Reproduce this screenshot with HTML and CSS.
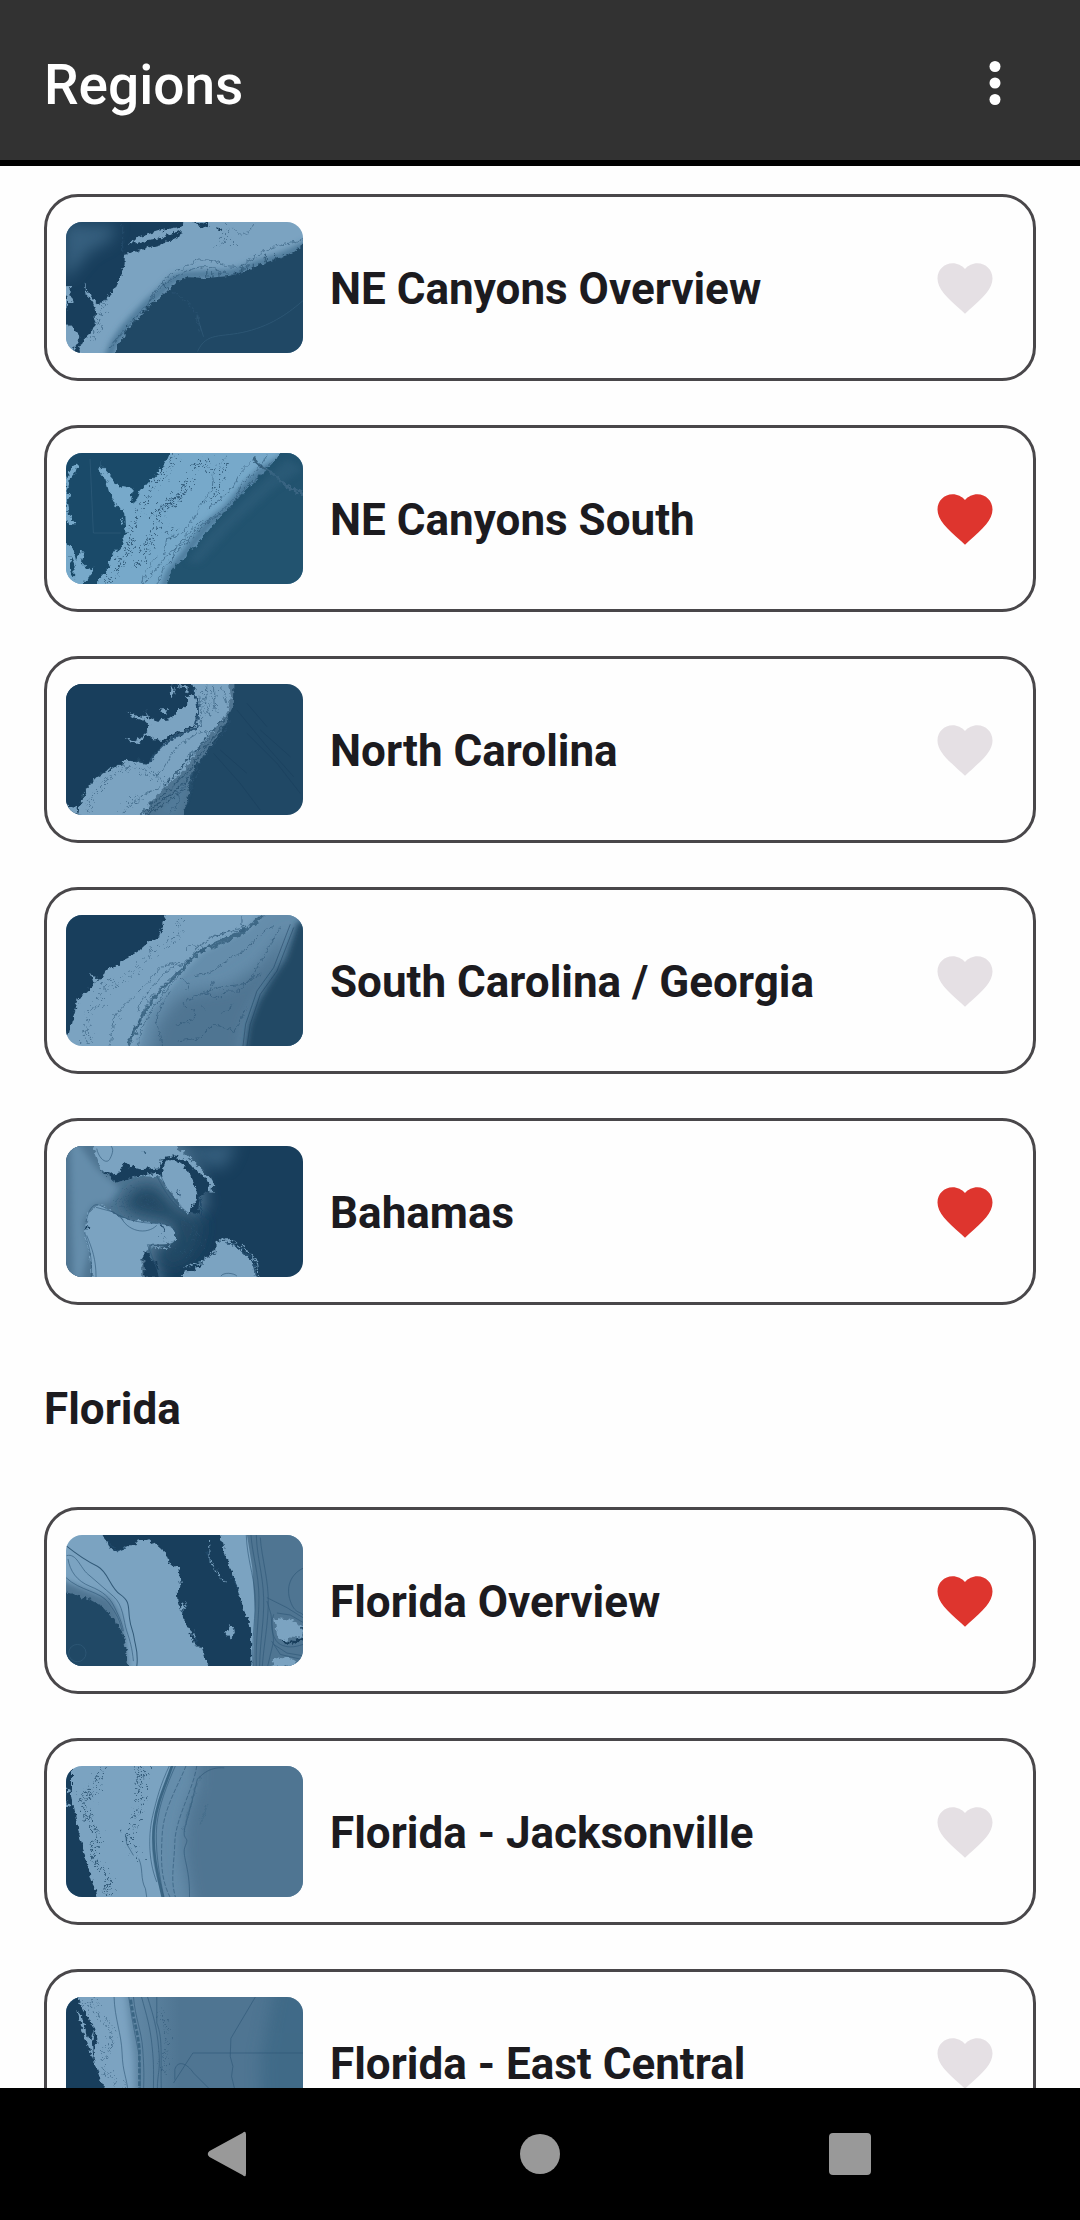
FILE: index.html
```
<!DOCTYPE html>
<html lang="en">
<head>
    <meta charset="UTF-8">
    <meta name="viewport" content="width=device-width, initial-scale=1.0">
    <title>Regions</title>
    <link rel="stylesheet" href="styles.css">
</head>
<body>
    <!-- Shared icons and filters -->
    <svg class="defs" aria-hidden="true">
        <defs>
            <symbol id="heart" viewBox="0 0 24 24">
                <path d="M12 21.35l-1.45-1.32C5.4 15.36 2 12.28 2 8.5 2 5.42 4.42 3 7.5 3c1.74 0 3.41.81 4.5 2.09C13.09 3.81 14.76 3 16.5 3 19.58 3 22 5.42 22 8.5c0 3.78-3.4 6.86-8.55 11.54L12 21.35z"/>
            </symbol>
            <filter id="coast" x="-10%" y="-10%" width="120%" height="120%" color-interpolation-filters="sRGB">
                <feTurbulence type="fractalNoise" baseFrequency="0.07" numOctaves="3" seed="4"/>
                <feDisplacementMap in="SourceGraphic" scale="20" xChannelSelector="R" yChannelSelector="G"/>
            </filter>
            <filter id="squiggle" x="-30%" y="-30%" width="160%" height="160%" color-interpolation-filters="sRGB">
                <feTurbulence type="fractalNoise" baseFrequency="0.09" numOctaves="3" seed="9"/>
                <feDisplacementMap in="SourceGraphic" scale="70" xChannelSelector="R" yChannelSelector="G"/>
            </filter>
            <filter id="soft" x="-30%" y="-30%" width="160%" height="160%">
                <feGaussianBlur stdDeviation="10"/>
            </filter>
            <filter id="softer" x="-40%" y="-40%" width="180%" height="180%">
                <feGaussianBlur stdDeviation="22"/>
            </filter>
            <linearGradient id="slope" x1="0" x2="1" y1="0" y2="0">
                <stop offset="0" stop-color="#7ba3c1"/>
                <stop offset="1" stop-color="#4f7592"/>
            </linearGradient>
        </defs>
    </svg>

    <header class="app-bar">
        <h1>Regions</h1>
        <button class="icon-btn" type="button" aria-label="More options">
            <svg class="icon" viewBox="0 0 24 24">
                <circle cx="12" cy="6" r="2"/>
                <circle cx="12" cy="12" r="2"/>
                <circle cx="12" cy="18" r="2"/>
            </svg>
        </button>
    </header>

    <main class="content">
        <ul class="region-list">
            <li class="region-card">
                <a class="region-link" href="#ne-canyons-overview">
                    <svg class="thumb" viewBox="18 21 710 395" preserveAspectRatio="xMidYMid slice" aria-hidden="true">
                        <rect class="shelf" x="18" y="21" width="710" height="395"/>
                        <path class="slope-edge" filter="url(#soft)" d="M760 78 690 114 640 134 590 149 540 169 500 178 440 180 380 182 340 194 300 232 260 268 225 305 190 345 160 390 140 440"/>
                        <g filter="url(#coast)">
                            <path class="deep" d="M760 75 728 90 690 118 650 132 610 146 580 158 540 174 505 184 440 190 385 188 350 200 312 238 272 270 236 308 202 345 178 385 150 440H760Z"/>
                            <path class="land" d="M-10 0H382L362 36 300 48 265 58 235 68 205 82 220 88 262 76 296 72 330 58 366 50 360 64 312 86 268 98 222 112 192 118 190 155 180 192 168 218 142 246 122 270 112 264 98 252 84 232 74 206 80 240 96 262 108 290 106 325 92 356 74 372 58 404 64 440H-10Z"/>
                            <path class="land" d="M400 21 445 28 440 40 414 36ZM466 38 484 42 478 52Z"/>
                            <path class="shelf" d="M16 325 34 334 44 350 58 366 50 390 40 404 44 425H12ZM16 215 36 214 28 240 38 262 22 262 16 300Z"/>
                        </g>
                        <g class="haze" filter="url(#softer)">
                            <path d="M10 20 90 30 170 30 150 80 90 110 40 170 10 200Z"/>
                        </g>
                        <g class="ink" filter="url(#coast)">
                            <path d="M256 290C272 240 300 192 350 170S400 132 440 136 490 156 520 158 570 130 620 106 690 92 728 72"/>
                            <path d="M150 400C190 340 250 290 280 246S350 180 400 162 470 172 500 178 540 168 560 158"/>
                            <path class="strong" d="M302 206 330 226 350 240 380 262 410 300 420 350"/>
                            <path class="strong" d="M545 150v24M560 148v20M582 144v22M612 122v32M618 118v30M646 116v24M666 118v16M440 168v20M458 172v18M476 172v20M196 330v24M220 310v22"/>
                            <path d="M188 30V112M520 40 545 66 560 56 585 24"/>
                        </g>
                        <g class="ink" filter="url(#squiggle)">
                            <path d="M480 50 520 90M500 40 480 90M120 290 112 340 96 380M140 250 122 300 110 330"/>
                        </g>
                        <path class="trace" d="M412 410C440 350 480 370 560 350S690 290 728 258M430 366 410 300"/>
                    </svg>
                    <span class="region-name">NE Canyons Overview</span>
                </a>
                <button class="icon-btn fav" type="button" aria-pressed="false" aria-label="Favorite NE Canyons Overview"><svg class="icon"><use href="#heart"/></svg></button>
            </li>

            <li class="region-card">
                <a class="region-link" href="#ne-canyons-south">
                    <svg class="thumb" viewBox="18 21 710 395" preserveAspectRatio="xMidYMid slice" aria-hidden="true">
                        <rect class="shelf bright" x="18" y="21" width="710" height="395"/>
                        <path class="slope-edge" filter="url(#soft)" d="M700 20 600 80 550 130 500 190 440 240 400 290 370 330 330 380 310 430"/>
                        <g filter="url(#coast)">
                            <path class="deep teal" d="M760 0H670L645 48 600 92 556 132 530 160 496 198 462 232 440 262 428 270 412 300 380 320 372 340 338 368 312 440H760Z"/>
                            <path class="land teal" d="M-10 0H338L318 46 290 84 262 114 240 140 228 170 212 174 218 130 196 118 178 126 156 98 136 76 120 60 122 36 118 74 136 100 146 136 168 180 192 198 196 262 182 310 160 330 140 372 116 400 110 440H-10Z"/>
                            <path class="shelf bright" d="M16 100 30 80 44 60 54 56 46 80 30 98 22 130 30 150 20 170 28 210 48 236 26 236 14 200ZM16 290 40 310 48 340 60 316 74 318 66 350 84 370 100 366 88 396 70 410 60 440H10ZM172 308 170 330 146 356 152 336ZM184 216 190 236 180 238Z"/>
                            <path class="land teal" d="M30 330 44 360 42 400 32 370Z"/>
                        </g>
                        <path class="slope-edge dark" filter="url(#coast)" d="M582 36 596 58 640 86 680 122 728 146"/>
                        <g class="haze dim" filter="url(#soft)"><path d="M680 40 560 150 440 270 380 350 420 350 520 240 640 130 728 70Z"/></g>
                        <g class="ink" filter="url(#coast)">
                            <path d="M500 30 460 80 456 130 420 180 400 220 370 262 320 280 310 330"/>
                            <path d="M580 40 540 80 520 120 480 160 440 190"/>
                            <path d="M620 30 590 76 546 110 530 150 480 200 420 240 370 290 320 330 280 380 250 416"/>
                            <path d="M640 40 600 90 556 124 510 190 440 230 400 270 350 320 310 370 290 416"/>
                            <path d="M430 220 390 256 350 300 330 350M290 330 260 370 246 416"/>
                        </g>
                        <g class="ink strong" filter="url(#squiggle)">
                            <path d="M350 30 330 70 270 130 260 170 230 210 210 250"/>
                            <path d="M400 90 360 140 310 180 280 210M390 120 340 170 290 220 286 260M380 110 350 170"/>
                            <path d="M410 50 440 70 460 60 440 40 400 60M370 150 340 150 310 190"/>
                            <path d="M210 250 216 290 180 340 170 390 140 410M200 280 210 310 190 350M270 270 250 330 230 360M340 240 330 270"/>
                            <path d="M500 50 480 110 470 150 440 170M280 280 262 310 250 340 220 360"/>
                        </g>
                        <path class="trace" d="M90 40 100 262H182"/>
                    </svg>
                    <span class="region-name">NE Canyons South</span>
                </a>
                <button class="icon-btn fav" type="button" aria-pressed="true" aria-label="Favorite NE Canyons South"><svg class="icon"><use href="#heart"/></svg></button>
            </li>

            <li class="region-card">
                <a class="region-link" href="#north-carolina">
                    <svg class="thumb" viewBox="18 21 710 395" preserveAspectRatio="xMidYMid slice" aria-hidden="true">
                        <rect class="deep" x="18" y="21" width="710" height="395"/>
                        <path class="mid" filter="url(#coast)" d="M400 0H520L518 90 490 150 445 215 400 275 386 340 366 440H200Z"/>
                        <path class="shelf" filter="url(#coast)" d="M370 0H504L512 60 500 108 470 150 420 210 370 280 310 336 268 380 236 440H50L60 384 80 336 112 302 160 272 205 252 262 262 300 214 340 184 400 156 414 120 414 80 400 50Z"/>
                        <path class="haze" filter="url(#soft)" d="M390 290 370 370 350 416H290L320 370Z"/>
                        <path class="land" filter="url(#coast)" d="M-10 0H390L404 50 414 82 412 118 402 150 362 168 320 192 284 226 262 262 236 248 196 252 150 272 112 298 80 332 64 366 56 400 20 384-10 390Z"/>
                        <g filter="url(#coast)">
                            <path class="shelf" d="M380 60 400 54 412 84 408 140 372 160 330 176 300 196 280 186 262 172 250 190 228 202 208 196 196 180 216 192 240 186 262 166 270 148 258 134 226 124 196 108 236 118 262 124 256 100 266 124 290 132 326 128 346 112 348 98 372 94 384 76Z"/>
                            <path class="shelf" d="M336 20 344 34 336 70 332 50ZM300 98 324 98 318 110 304 108ZM350 26 382 26 382 50 370 34ZM18 386 50 394 52 412H18Z"/>
                        </g>
                        <g class="ink thick" filter="url(#coast)">
                            <path d="M262 264C300 210 330 180 408 154C418 120 416 70 398 36"/>
                        </g>
                        <g class="ink strong" filter="url(#coast)">
                            <path d="M240 416C300 356 360 320 400 262S460 180 508 124"/>
                            <path d="M250 416C310 366 372 330 410 270S470 200 512 130"/>
                            <path d="M262 416C320 374 384 340 420 282M310 330C360 280 420 210 440 180S500 130 506 110"/>
                        </g>
                        <g class="ink" filter="url(#coast)">
                            <path d="M290 300C320 270 330 220 380 190S420 160 440 172 410 220 380 240"/>
                            <path d="M416 60C420 90 430 120 420 150M440 30 436 80 450 120M484 30 500 80M460 30 462 100"/>
                            <path d="M300 330 260 350 220 380 190 410M300 376 350 340 360 370 330 410M380 300 360 350M396 290C400 330 390 370 370 400"/>
                        </g>
                        <g class="ink" filter="url(#squiggle)">
                            <path d="M80 410 92 360 130 320 180 280 240 268 270 290M250 290 300 300 310 330M190 396 250 350M430 50 432 110M460 40 464 100"/>
                        </g>
                        <path class="trace dark" d="M530 100 620 210 700 300M560 170 650 260 720 350M460 230 540 320 600 400M480 220 560 290M600 160 690 240M560 80 620 150"/>
                    </svg>
                    <span class="region-name">North Carolina</span>
                </a>
                <button class="icon-btn fav" type="button" aria-pressed="false" aria-label="Favorite North Carolina"><svg class="icon"><use href="#heart"/></svg></button>
            </li>

            <li class="region-card">
                <a class="region-link" href="#south-carolina-georgia">
                    <svg class="thumb" viewBox="18 21 710 395" preserveAspectRatio="xMidYMid slice" aria-hidden="true">
                        <rect class="shelf" x="18" y="21" width="710" height="395"/>
                        <path class="mid light" filter="url(#soft)" d="M760 0H620L560 66 430 130 380 180 330 240 260 320 226 440H760Z"/>
                        <path class="mid" filter="url(#softer)" d="M350 270 420 250 500 240 590 180 690 60 660 200 600 270 560 350 540 480H260L290 350Z"/>
                        <path class="deep" filter="url(#soft)" d="M780 20 710 46 676 150 630 220 594 280 566 350 550 450H780Z"/>
                        <path class="land" filter="url(#coast)" d="M-10 0H324L306 50 298 84 262 106 236 130 206 148 176 170 138 188 130 208 100 226 84 246 62 262 48 300 36 340 26 380-10 400Z"/>
                        <path class="shelf" filter="url(#coast)" d="M90 192 106 214 130 212 100 224Z"/>
                        <g class="ink thick light" filter="url(#coast)">
                            <path d="M610 22C570 76 500 84 440 120S390 160 370 182 300 240 262 300 226 370 204 416"/>
                            <path d="M598 30C560 80 500 96 450 124"/>
                        </g>
                        <g class="ink" filter="url(#coast)">
                            <path d="M598 24C570 70 490 66 440 100S400 150 380 162 320 180 290 220 240 270 234 310"/>
                            <path d="M370 180C330 210 270 260 250 310S220 370 208 400M376 186C330 230 290 280 262 330S240 380 236 412"/>
                            <path d="M380 130C370 110 410 106 420 120S400 150 440 120M450 90 500 74 550 70"/>
                            <path d="M160 350C160 310 210 280 240 250S290 190 300 182 350 160 370 166M160 350 150 416"/>
                            <path d="M640 60C590 70 580 110 550 130S490 160 470 180 420 200 400 204M360 210 390 230 380 250"/>
                            <path d="M660 60C620 130 600 160 580 200S520 230 490 236 400 270 380 276 370 300 400 310 380 350 350 352 390 362"/>
                            <path d="M330 250C310 290 280 320 290 350S300 400 310 416M350 400 420 390 460 350 520 370 560 300"/>
                            <path d="M460 220 440 260 480 270 500 250 540 250 560 220 600 200M430 300 440 310M480 320 520 290M545 25V50L560 60"/>
                        </g>
                        <g class="ink" filter="url(#squiggle)">
                            <path d="M362 30 352 90 300 116 270 140 240 170 200 210M160 216 130 240 120 290 90 310 80 350 84 400M190 220 140 240 120 260M80 370 70 410M180 320 150 350"/>
                        </g>
                        <path class="trace dark" d="M700 60 650 190 600 260 570 350 560 416M690 50 640 180 590 250 556 350 548 416"/>
                    </svg>
                    <span class="region-name">South Carolina / Georgia</span>
                </a>
                <button class="icon-btn fav" type="button" aria-pressed="false" aria-label="Favorite South Carolina / Georgia"><svg class="icon"><use href="#heart"/></svg></button>
            </li>

            <li class="region-card">
                <a class="region-link" href="#bahamas">
                    <svg class="thumb" viewBox="18 21 710 395" preserveAspectRatio="xMidYMid slice" aria-hidden="true">
                        <rect class="land" x="18" y="21" width="710" height="395"/>
                        <path class="mid" filter="url(#softer)" d="M-60-60H330L420 100 440 200 350 290 350 330 290 340 310 480H-60Z"/>
                        <path class="mid light" filter="url(#soft)" d="M30-20 110 90 180 150 150 190 100 200 70 250 90 330 60 440 40 440 36 250Z"/>
                        <path class="deep" filter="url(#softer)" d="M230 140 290 140 340 200 430 250 410 330 360 380 310 380 290 330 360 310 330 250 230 230 180 200Z"/>
                        <path class="haze" filter="url(#softer)" d="M340 10 440 20 530 10 500 80 460 90 400 56Z"/>
                        <g filter="url(#coast)">
                            <path class="shelf" d="M94 10H330L380 50 420 90 460 130 452 160 430 150 400 210 384 226 350 190 300 116 240 112 200 122 166 132 126 96 112 60Z"/>
                            <path class="shelf" d="M112 196 140 206 180 236 230 246 300 252 330 262 352 300 330 316 266 318 258 340 244 366 248 440H96L92 360 74 290 84 226Z"/>
                            <path class="shelf" d="M500 300 520 316 560 346 586 380 590 440H356L370 400 410 388 436 362 466 340 466 310Z"/>
                            <path class="land" d="M122 94 160 108 180 104 192 70 210 84 240 92 300 86 302 60 340 54 380 66 400 90 428 110 450 140 442 160 420 172 412 226 386 222 410 180 404 140 380 90 346 64 316 66 306 90 310 116 290 104 240 110 200 122 168 132Z"/>
                            <path class="land" d="M250 340 262 336 270 360 288 372 296 416 254 416 250 380ZM358 384 404 380 402 396 362 398ZM80 260 88 270 76 274Z"/>
                        </g>
                        <g class="ink thick" filter="url(#coast)">
                            <path d="M496 310 540 330 580 366 586 410M300 250 314 276M250 34 256 46M350 156 360 170M420 170 424 240"/>
                        </g>
                        <g class="ink">
                            <path d="M78 250C84 220 96 190 120 200S180 240 240 250 330 244 352 290"/>
                            <path d="M74 280C80 310 98 340 94 416M80 290C96 330 108 360 108 416M180 230C200 280 260 290 290 260M108 206 160 220 190 244"/>
                            <path d="M300 106C320 160 360 210 390 226M290 112C310 150 330 190 370 220M110 30C116 60 140 80 150 60S160 30 152 21M350 300 320 324 262 318 300 416"/>
                        </g>
                        <g class="ink" filter="url(#squiggle)">
                            <path d="M160 190 200 190 230 210 270 200M190 170 240 150 270 180 300 210M200 230 230 180M250 170 290 230M330 230 400 270 420 320M300 290 360 340 400 350"/>
                        </g>
                        <g class="edge" filter="url(#coast)">
                            <path d="M466 310 490 298 520 306 560 336 592 372 596 416M410 90 460 126 452 166M350 296 320 330 276 324M366 388 420 372 466 334"/>
                        </g>
                        <path class="ink" d="M482 412C490 400 520 402 530 412"/>
                    </svg>
                    <span class="region-name">Bahamas</span>
                </a>
                <button class="icon-btn fav" type="button" aria-pressed="true" aria-label="Favorite Bahamas"><svg class="icon"><use href="#heart"/></svg></button>
            </li>
        </ul>

        <h2 class="section-title">Florida</h2>

        <ul class="region-list">
            <li class="region-card">
                <a class="region-link" href="#florida-overview">
                    <svg class="thumb" viewBox="18 21 710 395" preserveAspectRatio="xMidYMid slice" aria-hidden="true">
                        <rect class="shelf" x="18" y="21" width="710" height="395"/>
                        <path class="mid" filter="url(#soft)" d="M-10 150 90 190 150 212 176 254 194 320 206 440H-10Z"/>
                        <path class="mid" d="M560 21H728V416H578L584 250 576 120Z"/>
                        <path class="deep" filter="url(#coast)" d="M-10 186 40 200 90 216 130 238 158 270 186 312 198 370 208 440H-10Z"/>
                        <path class="land" filter="url(#coast)" d="M110 0H474L490 66 514 130 534 190 552 250 572 300 574 440H456L440 404 424 356 404 356 390 310 364 262 352 220 350 196 362 166 354 120 332 112 320 80 296 58 262 34 236 34 226 50 204 50 180 70 152 64 144 44Z"/>
                        <g filter="url(#coast)">
                            <path class="shelf" d="M494 312 510 290 522 300 524 322 510 334ZM360 226 380 236 372 250 360 262ZM400 316 410 326 402 334ZM446 84 454 104 448 102Z"/>
                            <path class="shelf" d="M642 270 690 276 728 296V330L690 326 680 340 652 334ZM640 388 700 396 728 416H634Z"/>
                            <path class="land" d="M656 334 688 344 728 326V340L680 352ZM722 296 730 300 726 316Z"/>
                        </g>
                        <g class="ink">
                            <path class="strong" d="M18 54C50 80 80 100 112 116S150 180 180 200 204 236 208 270 220 310 222 330 236 370 230 416"/>
                            <path d="M20 84C50 76 60 120 84 140S130 180 160 206 190 280 200 310 216 360 220 400"/>
                            <path d="M24 94C30 130 50 160 90 176S150 210 164 240 184 280 190 310M18 150C60 190 120 190 146 226S180 280 186 310"/>
                            <path d="M558 21C560 90 580 140 584 200S574 330 578 416M572 21C576 80 596 140 596 210S586 330 588 416"/>
                            <path d="M588 21C590 90 608 140 610 210S600 330 598 416M600 30C604 90 626 160 624 230S612 340 606 416"/>
                            <path d="M728 122C690 140 676 180 690 220S720 250 728 262M620 210 680 240 728 270M620 220 632 260 640 340 622 416"/>
                            <path d="M640 260C626 300 640 340 660 350S700 360 728 350M650 256 690 262 728 284M640 350 680 376 728 384M634 340 660 380 728 396"/>
                        </g>
                        <g class="ink thick" filter="url(#coast)">
                            <path d="M144 44 174 72 206 56M516 150 534 186M440 70 450 100M380 230 364 256M400 330 412 350"/>
                        </g>
                        <path class="edge dashed" filter="url(#coast)" d="M448 30 450 100 476 140 494 166M378 220 374 246M404 312 406 330"/>
                        <circle class="trace" cx="52" cy="376" r="26"/>
                    </svg>
                    <span class="region-name">Florida Overview</span>
                </a>
                <button class="icon-btn fav" type="button" aria-pressed="true" aria-label="Favorite Florida Overview"><svg class="icon"><use href="#heart"/></svg></button>
            </li>

            <li class="region-card">
                <a class="region-link" href="#florida-jacksonville">
                    <svg class="thumb" viewBox="18 21 710 395" preserveAspectRatio="xMidYMid slice" aria-hidden="true">
                        <rect class="shelf" x="18" y="21" width="710" height="395"/>
                        <path class="mid light" d="M340 21H440V416H310C270 320 260 220 300 120Z"/>
                        <path class="mid" filter="url(#softer)" d="M410-60H820V500H410C370 330 340 220 410 80Z"/>
                        <path class="land" filter="url(#coast)" d="M-10 0H36L36 110 46 170 56 220 74 290 92 350 120 440H-10Z"/>
                        <path class="shelf" filter="url(#coast)" d="M18 90 34 98 20 104ZM18 128 34 140 20 146Z"/>
                        <path class="slope-edge dark" d="M336 21C316 80 290 130 282 200S290 340 308 416"/>
                        <g class="ink">
                            <path d="M328 21C300 80 290 120 278 170S262 300 290 370"/>
                            <path d="M346 21C320 80 296 140 290 200S296 350 312 416"/>
                            <path class="dashed" d="M378 21C350 90 310 150 306 230S302 360 330 416M410 21C400 90 346 180 344 250S330 360 346 416"/>
                            <path d="M412 60C400 110 390 150 376 200S390 230 376 260 390 320 388 416M414 60C440 30 470 26 492 28"/>
                            <path d="M236 300C250 330 240 360 256 390L260 416M196 226 200 256 220 290"/>
                        </g>
                        <g class="ink strong" filter="url(#squiggle)">
                            <path d="M120 24 116 80 100 100 70 100 68 140 80 180 110 220 104 260 96 300 120 320 140 350 150 410"/>
                            <path d="M90 120 60 130 90 180M110 230 100 290 120 330 150 360 130 400M76 90 100 130"/>
                            <path d="M240 24 262 40 240 60 244 100 240 150 220 180 216 220 196 240 220 270 236 300M230 30 236 80 246 130"/>
                        </g>
                        <path class="trace" filter="url(#coast)" d="M420 50 390 140 370 220M440 140 420 200"/>
                    </svg>
                    <span class="region-name">Florida - Jacksonville</span>
                </a>
                <button class="icon-btn fav" type="button" aria-pressed="false" aria-label="Favorite Florida - Jacksonville"><svg class="icon"><use href="#heart"/></svg></button>
            </li>

            <li class="region-card">
                <a class="region-link" href="#florida-east-central">
                    <svg class="thumb" viewBox="18 111 710 395" preserveAspectRatio="xMidYMid slice" aria-hidden="true">
                        <rect class="mid" x="18" y="111" width="710" height="395"/>
                        <rect x="18" y="111" width="340" height="395" fill="url(#slope)"/>
                        <path class="shelf" filter="url(#soft)" d="M20 50H190L220 300 230 530H60Z"/>
                        <path class="haze dim" filter="url(#softer)" d="M650 40H820V580H610L600 300Z"/>
                        <path class="land" filter="url(#coast)" d="M-10 90H40L70 150 100 200 112 240 100 270 108 320 130 380 170 530H-10Z"/>
                        <path class="shelf" filter="url(#coast)" d="M52 156 66 170 74 210 90 240 102 210 96 250 100 300 84 260 70 220Z"/>
                        <g class="ink">
                            <path d="M162 111C164 180 184 220 186 280S200 350 204 400M206 111C214 170 222 210 232 260S240 330 240 400"/>
                            <path d="M220 111C226 180 244 210 248 270S252 350 250 400M244 111C260 170 270 200 276 260S280 340 280 400M290 111V190C310 240 300 300 304 400M262 111C280 170 290 200 296 270S290 340 292 400"/>
                            <path d="M586 111 512 236 510 290 518 320 514 350 526 400M340 370 398 280H728M344 360V330C352 300 380 310 400 340L450 390"/>
                        </g>
                        <g class="slope-edge dashed"><path d="M212 120C220 180 234 220 238 270V400"/></g>
                        <g class="ink" filter="url(#squiggle)">
                            <path d="M66 116 90 140 110 120M90 150 130 180 158 210 150 260 120 300 140 340 190 390M110 330 140 350M300 150 320 220 310 340"/>
                        </g>
                    </svg>
                    <span class="region-name">Florida - East Central</span>
                </a>
                <button class="icon-btn fav" type="button" aria-pressed="false" aria-label="Favorite Florida - East Central"><svg class="icon"><use href="#heart"/></svg></button>
            </li>
        </ul>
    </main>

    <!-- System navigation -->
    <nav class="system-nav" aria-label="System">
        <button type="button" aria-label="Back">
            <svg class="nav-icon" viewBox="0 0 48 48"><path d="M40 4.500V43.500Q40 48 36.500 45L3.500 27Q0 24 3.500 21L36.500 3Q40 0 40 4.500Z"/></svg>
        </button>
        <button type="button" aria-label="Home">
            <svg class="nav-icon" viewBox="0 0 48 48"><circle cx="24" cy="24" r="20"/></svg>
        </button>
        <button type="button" aria-label="Recent apps">
            <svg class="nav-icon" viewBox="0 0 48 48"><rect x="3" y="3" width="42" height="42" rx="4"/></svg>
        </button>
    </nav>
</body>
</html>
```
FILE: styles.css
```
* {
    margin: 0;
    padding: 0;
    box-sizing: border-box;
}

body {
    display: flex;
    flex-direction: column;
    height: 100vh;
    font-family: Roboto, "Liberation Sans", sans-serif;
    font-size: 44px;
    line-height: 48px;
    color: #1c1b1f;
    background: #fefefe;
}

button {
    background: none;
    border: none;
    cursor: pointer;
}

.defs {
    position: absolute;
    width: 0;
    height: 0;
}

/* App bar */
.app-bar {
    display: flex;
    align-items: flex-start;
    justify-content: space-between;
    flex-shrink: 0;
    padding: 50px 52px 40px 44px;
    background: #323232;
    border-bottom: 6px solid #000;
    color: #fff;
}

.app-bar h1 {
    font-size: 55px;
    font-weight: 500;
    line-height: 70px;
}

.icon-btn {
    flex-shrink: 0;
    height: 66px;
}

.icon {
    display: block;
    width: 66px;
    height: 66px;
    fill: currentColor;
}

.app-bar .icon-btn {
    color: #fff;
}

/* Region list */
.content {
    flex: 1;
    min-height: 0;
    overflow-y: auto;
    scrollbar-width: none;
    padding: 28px 44px 44px;
}

.region-list {
    display: flex;
    flex-direction: column;
    gap: 44px;
    list-style: none;
}

.region-card {
    display: flex;
    align-items: center;
    padding: 25px 35px 25px 19px;
    border: 3px solid #49474a;
    border-radius: 34px;
}

.region-link {
    display: flex;
    align-items: center;
    flex: 1;
    gap: 27px;
    color: inherit;
    text-decoration: none;
}

.region-name {
    padding-top: 2px;
    font-weight: 700;
}

.section-title {
    padding: 80px 0 74px;
    font-size: 44px;
    font-weight: 700;
    line-height: 48px;
}

.fav {
    color: #e5e0e4;
}

.fav[aria-pressed="true"] {
    color: #de352e;
}

/* Chart thumbnails */
.thumb {
    flex-shrink: 0;
    width: 237px;
    height: 131px;
    border-radius: 16px;
    overflow: hidden;
}

.shelf { fill: #7ba3c1; }
.shelf.bright { fill: #77a9ca; }
.land { fill: #183e5c; }
.land.teal { fill: #1a4a69; }
.deep { fill: #204865; }
.deep.teal { fill: #22536f; }
.mid { fill: #4f7592; }
.mid.light { fill: #658dab; }

.haze {
    fill: #5581a0;
    opacity: 0.5;
}

.haze.dim {
    fill: #32607e;
}

.ink {
    fill: none;
    stroke: #2d5675;
    stroke-width: 2;
    opacity: 0.9;
}

.strong {
    stroke: #2a5270;
    stroke-width: 3;
}

.ink.thick {
    stroke: #20496a;
    stroke-width: 5;
}

.ink.thick.light {
    stroke: #3a6482;
    stroke-width: 8;
}

.edge {
    fill: none;
    stroke: #7ba3c1;
    stroke-width: 3;
}

.slope-edge {
    fill: none;
    stroke: #426f90;
    stroke-width: 20;
}

.slope-edge.dark,
.slope-edge.dashed {
    stroke: #3a6583;
    stroke-width: 8;
}

.trace {
    fill: none;
    stroke: #3b6583;
    stroke-width: 2;
    opacity: 0.7;
}

.trace.dark {
    stroke: #173c5a;
}

.dashed {
    stroke-dasharray: 14 5;
}

/* System navigation */
.system-nav {
    display: flex;
    justify-content: center;
    gap: 262px;
    flex-shrink: 0;
    padding: 42px 0;
    background: #000;
}

.nav-icon {
    display: block;
    width: 48px;
    height: 48px;
    fill: #999;
}
```
